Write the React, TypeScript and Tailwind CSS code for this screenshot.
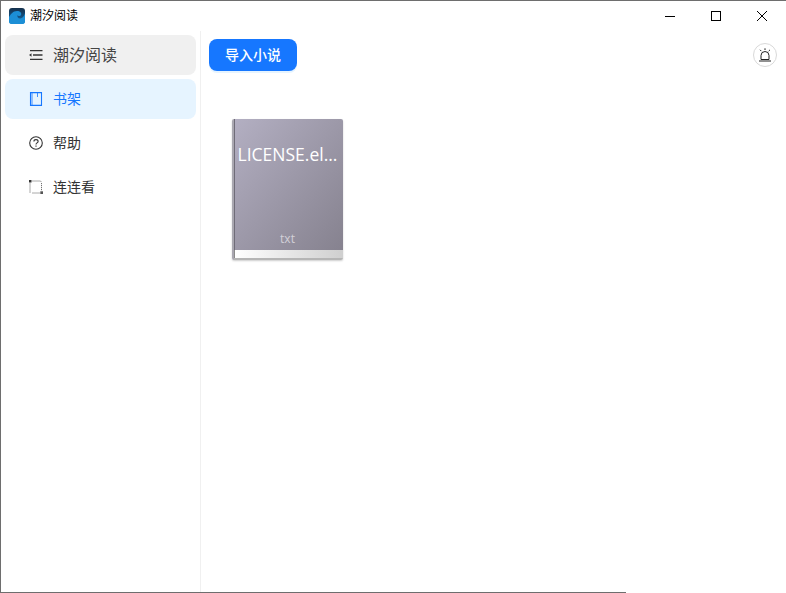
const cjk = '"Noto Sans CJK SC", "Liberation Sans", sans-serif';

function Logo() {
    return (
        <svg width="16" height="16" viewBox="0 0 16 16" className="shrink-0">
            <defs>
                <linearGradient id="logoBg" x1="0" y1="0" x2="0" y2="1">
                    <stop offset="0" stopColor="#15304c" />
                    <stop offset="0.55" stopColor="#14507f" />
                    <stop offset="1" stopColor="#1787cf" />
                </linearGradient>
            </defs>
            <rect width="16" height="16" rx="3" fill="url(#logoBg)" />
            <path d="M0 9c2-3 4-6 8-6 3 0 5 2 4 4-.6 1.300-3 1.500-3.500 0C8 9.500 9.500 11 11.500 10.500 14 10 15.500 7.500 16 5v8a3 3 0 0 1-3 3H3a3 3 0 0 1-3-3z" fill="#1c8fd6" />
        </svg>
    );
}

function MenuIcon() {
    return (
        <svg width="14" height="10" viewBox="0 0 14 10" fill="none" stroke="#333" strokeWidth="1.300">
            <path d="M1 .7h12.500M4 5h9.500M1 9.300h12.500" />
            <path d="M0 5l2.500-1.800v3.600z" fill="#333" stroke="none" />
        </svg>
    );
}

function BookIcon() {
    return (
        <svg width="14" height="14" viewBox="0 0 14 14" fill="none" stroke="#1677ff" strokeWidth="1.100">
            <path d="M1.500 .6h11v12.800h-11z" />
            <path d="M8.500 .6v4.400M3 .6v12.800" strokeWidth="0.800" />
        </svg>
    );
}

function HelpIcon() {
    return (
        <svg width="14" height="14" viewBox="0 0 14 14" fill="none" stroke="#333" strokeWidth="1.100">
            <circle cx="7" cy="7" r="6.300" />
            <path d="M4.900 5.500c0-1.200 1-1.900 2.100-1.900s2.100.7 2.100 1.800c0 1.500-2.100 1.500-2.100 3" />
            <path d="M7 9.600v1.200" />
        </svg>
    );
}

function LianIcon() {
    return (
        <svg width="14" height="14" viewBox="0 0 14 14" fill="none" stroke="#444" strokeWidth="0.900">
            <path d="M3.500 1h7q2 0 2 2v7.500M10.500 13H3.500M1 3.500V13" strokeDasharray="1 1" />
            <rect x="0" y="0" width="2.500" height="2.500" fill="#333" stroke="none" />
            <rect x="11.300" y="11.300" width="2.700" height="2.700" fill="#555" stroke="none" />
        </svg>
    );
}

function AlarmIcon() {
    return (
        <svg width="14" height="14" viewBox="0 0 14 14" fill="none" stroke="#222" strokeWidth="1">
            <path d="M3 11.500V7.500a4 4 0 0 1 8 0v4" />
            <path d="M1 13h12M3 11.500h8" />
            <path d="M7 .3v1.700M2 1.800l1.300 1.300M12 1.800l-1.300 1.300" />
        </svg>
    );
}

function WindowButtons() {
    return (
        <div className="flex h-full pr-px">
            <button className="w-[46px] h-full flex items-center justify-center">
                <svg width="10" height="10" viewBox="0 0 10 10" stroke="#000" strokeWidth="1"><path d="M0 5.500h10" /></svg>
            </button>
            <button className="w-[46px] h-full flex items-center justify-center">
                <svg width="10" height="10" viewBox="0 0 10 10" fill="none" stroke="#000" strokeWidth="1"><rect x="0.500" y="0.500" width="9" height="9" /></svg>
            </button>
            <button className="w-[46px] h-full flex items-center justify-center">
                <svg width="10" height="10" viewBox="0 0 10 10" fill="none" stroke="#000" strokeWidth="1"><path d="M0 0l10 10M10 0L0 10" /></svg>
            </button>
        </div>
    );
}

function MenuItem({
    icon,
    label,
    active,
}: {
    icon: React.ReactNode;
    label: string;
    active?: boolean;
}) {
    return (
        <div
            className={`h-10 rounded-lg flex items-center pl-6 gap-[10px] text-[14px] ${
                active ? 'bg-[#e6f4ff] text-[#1677ff]' : 'text-[#333333]'
            }`}
        >
            {icon}
            <span className="leading-[20px] -mt-0.5">{label}</span>
        </div>
    );
}

function Book() {
    return (
        <div className="w-[111px] h-[141px] flex flex-col rounded-[2px] overflow-hidden shadow-[0_1px_2px_rgba(0,0,0,0.2)] border-l-[2px] border-[#a9a7b0]">
            <div className="h-[131px] border-l border-[#6f6c78] bg-gradient-to-br from-[#b3afc2] to-[#86828f] flex flex-col items-center text-white">
                <div className="mt-[23px] text-[17.500px] leading-[24px] whitespace-nowrap font-['Open_Sans',sans-serif] ml-[-3px]">
                    LICENSE.el...
                </div>
                <div className="mt-auto mb-[3px] ml-[-3px] text-[12px] leading-[16px] text-[#d2d0d8] font-['Open_Sans',sans-serif]">
                    txt
                </div>
            </div>
            <div className="h-2 border-l border-[#8a8a8a] bg-gradient-to-r from-white to-[#cfcfcf]" />
            <div className="h-[2px] bg-[#b5b5b5]" />
        </div>
    );
}

export default function App() {
    return (
        <div
            className="w-[786px] h-[593px] bg-white flex flex-col border-t border-l border-[#6e6e6e] overflow-hidden"
            style={{ fontFamily: cjk }}
        >
            {/* Title bar */}
            <div className="h-[30px] shrink-0 flex items-center justify-between pl-2">
                <div className="flex items-center gap-[5px] text-[12px] text-black">
                    <Logo />
                    <span className="-mt-0.5">潮汐阅读</span>
                </div>
                <WindowButtons />
            </div>

            <div className="flex flex-1 min-h-0">
                {/* Sidebar */}
                <aside className="w-[200px] shrink-0 border-r border-[#f0f0f0] pt-1 pl-1 pr-1 flex flex-col gap-1">
                    <div className="h-10 rounded-lg bg-[#f0f0f0] flex items-center pl-6 gap-[10px] text-[16px] text-[#444444]">
                        <MenuIcon />
                        <span className="-mt-0.5">潮汐阅读</span>
                    </div>
                    <MenuItem active icon={<BookIcon />} label="书架" />
                    <MenuItem icon={<HelpIcon />} label="帮助" />
                    <MenuItem icon={<LianIcon />} label="连连看" />
                </aside>

                {/* Main */}
                <main className="flex-1 min-w-0 pt-2 pl-2 pr-[9px]">
                    <div className="flex items-center justify-between">
                        <button className="w-[88px] h-8 pb-0.5 rounded-lg bg-[#1677ff] text-white text-[14px] font-medium shadow-[0_2px_0_rgba(5,145,255,0.1)]">
                            导入小说
                        </button>
                        <div className="w-6 h-6 rounded-full border border-[#d9d9d9] flex items-center justify-center">
                            <AlarmIcon />
                        </div>
                    </div>
                    <div className="pt-12 pl-[23px]">
                        <Book />
                    </div>
                </main>
            </div>

            {/* Window edge only shows under the left part */}
            <div className="h-px w-[625px] shrink-0 bg-[#6e6e6e]" />
        </div>
    );
}
